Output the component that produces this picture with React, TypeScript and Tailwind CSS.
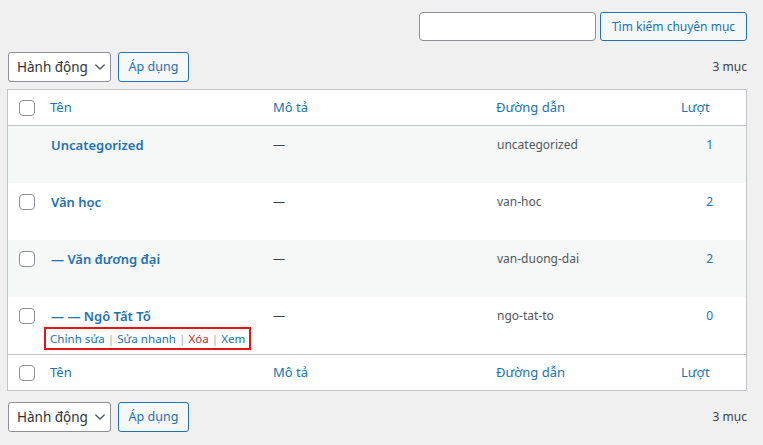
import React from 'react'

const rows = [
  { name: 'Uncategorized', slug: 'uncategorized', count: 1, check: false },
  { name: 'Văn học', slug: 'van-hoc', count: 2, check: true },
  { name: '— Văn đương đại', slug: 'van-duong-dai', count: 2, check: true },
  { name: '— — Ngô Tất Tố', slug: 'ngo-tat-to', count: 0, check: true, actions: true },
]

const cols = 'grid grid-cols-[42px_223px_223px_185px_1fr]'

function Checkbox() {
  return <span className="block w-4 h-4 rounded-[4px] border border-[#8c8f94] bg-white" />
}

function Chevron() {
  return (
    <svg width="14" height="14" viewBox="0 0 20 20" fill="none" stroke="#50575e" strokeWidth="2" strokeLinecap="round" strokeLinejoin="round">
      <path d="M4 7l6 6 6-6" />
    </svg>
  )
}

function BulkBar() {
  return (
    <div className="flex items-center gap-[7px] ml-[1px]">
      <div className="flex items-center justify-between h-[30px] w-[103px] rounded-[3px] border border-[#8c8f94] bg-white pl-[8px] pr-[3px] text-[#2c3338] text-[13.5px]">
        <span>Hành động</span>
        <Chevron />
      </div>
      <div className="flex items-center h-[30px] w-[71px] justify-center rounded-[3px] border border-[#2271b1] bg-[#f6f7f7] text-[#2271b1] text-[12.5px]">
        Áp dụng
      </div>
    </div>
  )
}

function HeaderRow({ bottom }: { bottom?: boolean }) {
  return (
    <div className={`${cols} h-[36px] items-center text-[13px] text-[#2271b1] ${bottom ? 'border-t' : 'border-b'} border-[#c3c4c7]`}>
      <div className="pl-[11px]"><Checkbox /></div>
      <div>Tên</div>
      <div>Mô tả</div>
      <div>Đường dẫn</div>
      <div>Lượt</div>
    </div>
  )
}

export default function App() {
  return (
    <div className="min-h-[445px] bg-[#f0f0f1] pl-[7px] pr-[16px] pt-[12px] text-[12px] text-[#3c434a]" style={{ fontFamily: '"Noto Sans", "Open Sans", sans-serif' }}>
      <div className="flex justify-end gap-[4px]">
        <div className="h-[29px] w-[177px] rounded-[4px] border border-[#8c8f94] bg-white" />
        <div className="flex items-center justify-center h-[29px] w-[147px] rounded-[3px] border border-[#2271b1] bg-[#f6f7f7] text-[#2271b1] text-[12px]">
          Tìm kiếm chuyên mục
        </div>
      </div>

      <div className="flex items-center justify-between mt-[11px]">
        <BulkBar />
        <span>3 mục</span>
      </div>

      <div className="mt-[7px] bg-white border border-[#c3c4c7]">
        <HeaderRow />
        {rows.map((r, i) => (
          <div key={r.slug} className={`${cols} h-[57px] pt-[9px] ${i % 2 === 0 ? 'bg-[#f6f7f7]' : 'bg-white'}`}>
            <div className="pl-[11px] pt-[2px]">{r.check && <Checkbox />}</div>
            <div>
              <div className="font-semibold text-[13px] text-[#2271b1] leading-[20px] pl-[1px]">{r.name}</div>
              {r.actions && (
                <div className="inline-block whitespace-nowrap mt-[1px] -ml-[6px] border-2 border-[#e3141c] px-[4px] leading-[19px] text-[11.6px]">
                  <span className="text-[#2271b1]">Chỉnh sửa</span>
                  <span className="text-[#a7aaad]"> | </span>
                  <span className="text-[#2271b1]">Sửa nhanh</span>
                  <span className="text-[#a7aaad]"> | </span>
                  <span className="text-[#b32d2e]">Xóa</span>
                  <span className="text-[#a7aaad]"> | </span>
                  <span className="text-[#2271b1]">Xem</span>
                </div>
              )}
            </div>
            <div className="leading-[20px]">—</div>
            <div className="leading-[20px] text-[#50575e] pl-[1px]">{r.slug}</div>
            <div className="leading-[20px] text-[#2271b1] text-right pr-[33px]">{r.count}</div>
          </div>
        ))}
        <HeaderRow bottom />
      </div>

      <div className="flex items-center justify-between mt-[11px]">
        <BulkBar />
        <span>3 mục</span>
      </div>
    </div>
  )
}
